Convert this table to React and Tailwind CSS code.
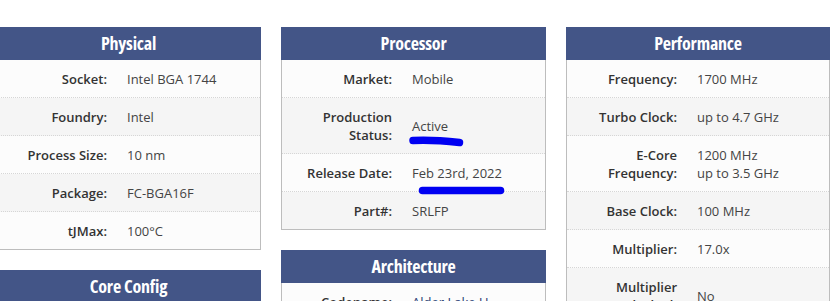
import React from 'react'

const physical = [
  ['Socket:', 'Intel BGA 1744'],
  ['Foundry:', 'Intel'],
  ['Process Size:', '10 nm'],
  ['Package:', 'FC-BGA16F'],
  ['tJMax:', '100°C'],
]

const processor = [
  ['Market:', 'Mobile'],
  [['Production', 'Status:'], 'Active'],
  ['Release Date:', 'Feb 23rd, 2022'],
  ['Part#:', 'SRLFP'],
]

const performance = [
  ['Frequency:', '1700 MHz'],
  ['Turbo Clock:', 'up to 4.7 GHz'],
  [['E-Core', 'Frequency:'], ['1200 MHz', 'up to 3.5 GHz']],
  ['Base Clock:', '100 MHz'],
  ['Multiplier:', '17.0x'],
  [['Multiplier', 'Unlocked:'], 'No'],
]

const coreConfig = [
  ['# of Cores:', '10'],
  ['# of Threads:', '12'],
]

const architecture = [
  ['Codename:', 'Alder Lake U', true],
  ['Generation:', 'Core i7'],
]

const Lines = ({ text }) =>
  Array.isArray(text) ? text.map((t) => <div key={t}>{t}</div>) : text

const Card = ({ title, rows, width, children }) => (
  <div className={`relative ${width}`}>
    <div className="h-[33px] bg-[#435587] flex items-center justify-center">
      <h2 className="text-white text-[18px] font-bold font-stretch-condensed tracking-[-0.2px]">{title}</h2>
    </div>
    <div className="border border-t-0 border-[#bdbdbd] bg-[#fcfcfc]">
      {rows.map(([label, value, link], i) => (
        <div
          key={i}
          className={`flex items-center py-[9.5px] leading-[18px] text-[13px] ${
            i < rows.length - 1 ? 'border-b border-dotted border-[#d6d6d6]' : ''
          } ${i % 2 === 1 ? 'bg-[#f5f5f5]' : ''}`}
        >
          <div className="w-[110px] shrink-0 text-right font-semibold text-[#333]">
            <Lines text={label} />
          </div>
          <div className={`pl-[20px] ${link ? 'text-[#2a3f74]' : 'text-[#444]'}`}>
            <Lines text={value} />
          </div>
        </div>
      ))}
    </div>
    {children}
  </div>
)

export default function App() {
  return (
    <div className="h-[301px] w-[835px] overflow-hidden bg-white font-['Open_Sans',sans-serif]">
      <div className="-ml-[4px] pt-[27px] flex gap-[20px] items-start">
        <div className="flex flex-col gap-[20px]">
          <Card title="Physical" rows={physical} width="w-[265px]" />
          <Card title="Core Config" rows={coreConfig} width="w-[265px]" />
        </div>
        <div className="flex flex-col gap-[20px]">
          <Card title="Processor" rows={processor} width="w-[265px]">
            {/* hand-drawn marker strokes */}
            <svg className="absolute inset-0 pointer-events-none" width="265" height="210">
              <path d="M132 113.5 C150 112.5 165 114 178.5 115.5" stroke="#0000f2" strokeWidth="7.5" strokeLinecap="round" fill="none" />
              <path d="M141.5 163.5 L219.5 163.5" stroke="#0000f2" strokeWidth="7.5" strokeLinecap="round" fill="none" />
            </svg>
          </Card>
          <Card title="Architecture" rows={architecture} width="w-[265px]" />
        </div>
        <Card title="Performance" rows={performance} width="w-[264px]" />
      </div>
    </div>
  )
}
